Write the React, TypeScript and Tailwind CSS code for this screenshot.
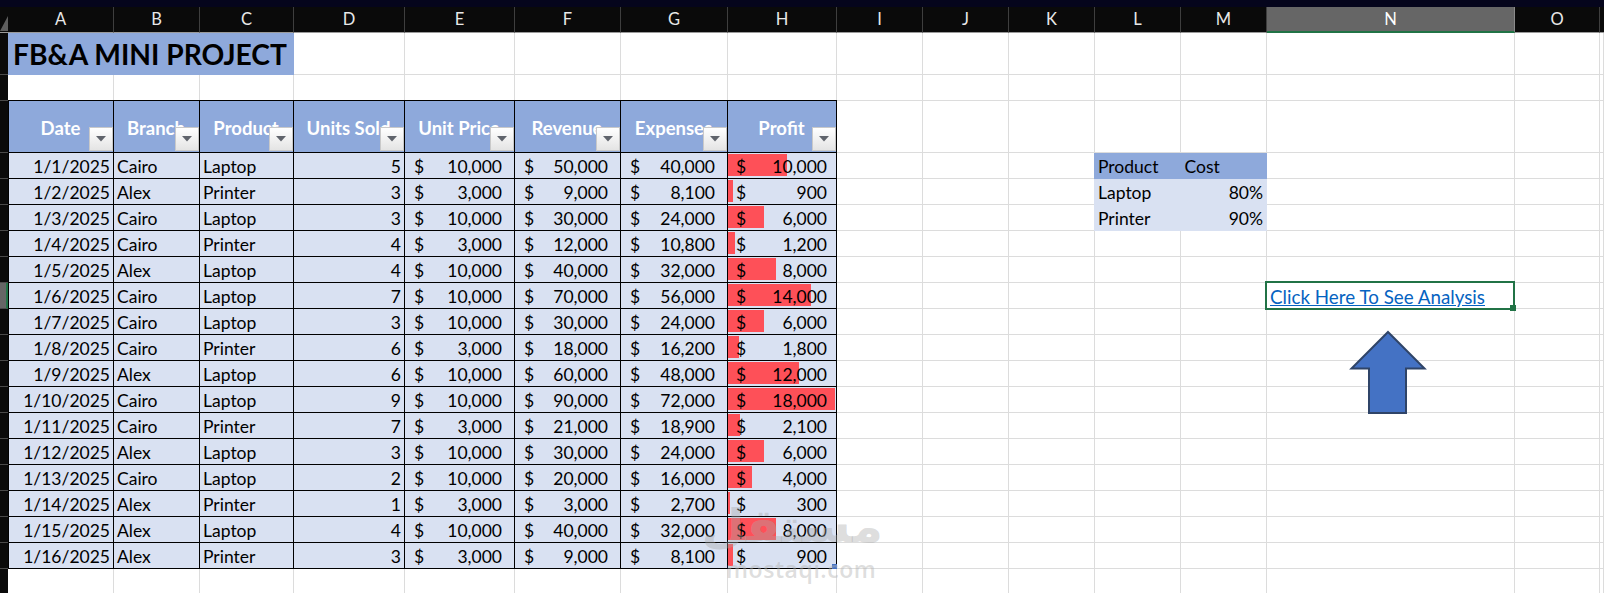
import React from "react";

const font = "font-['Lato','Liberation_Sans',sans-serif]";

const columns = ["A", "B", "C", "D", "E", "F", "G", "H", "I", "J", "K", "L", "M", "N", "O"];

const headers = ["Date", "Branch", "Product", "Units Sold", "Unit Price", "Revenue", "Expenses", "Profit"];

const sales = [
  ["1/1/2025", "Cairo", "Laptop", "5", "10,000", "50,000", "40,000", "10,000", 59],
  ["1/2/2025", "Alex", "Printer", "3", "3,000", "9,000", "8,100", "900", 5],
  ["1/3/2025", "Cairo", "Laptop", "3", "10,000", "30,000", "24,000", "6,000", 36],
  ["1/4/2025", "Cairo", "Printer", "4", "3,000", "12,000", "10,800", "1,200", 7],
  ["1/5/2025", "Alex", "Laptop", "4", "10,000", "40,000", "32,000", "8,000", 48],
  ["1/6/2025", "Cairo", "Laptop", "7", "10,000", "70,000", "56,000", "14,000", 83],
  ["1/7/2025", "Cairo", "Laptop", "3", "10,000", "30,000", "24,000", "6,000", 36],
  ["1/8/2025", "Cairo", "Printer", "6", "3,000", "18,000", "16,200", "1,800", 11],
  ["1/9/2025", "Alex", "Laptop", "6", "10,000", "60,000", "48,000", "12,000", 71],
  ["1/10/2025", "Cairo", "Laptop", "9", "10,000", "90,000", "72,000", "18,000", 107],
  ["1/11/2025", "Cairo", "Printer", "7", "3,000", "21,000", "18,900", "2,100", 12],
  ["1/12/2025", "Alex", "Laptop", "3", "10,000", "30,000", "24,000", "6,000", 36],
  ["1/13/2025", "Cairo", "Laptop", "2", "10,000", "20,000", "16,000", "4,000", 24],
  ["1/14/2025", "Alex", "Printer", "1", "3,000", "3,000", "2,700", "300", 2],
  ["1/15/2025", "Alex", "Laptop", "4", "10,000", "40,000", "32,000", "8,000", 48],
  ["1/16/2025", "Alex", "Printer", "3", "3,000", "9,000", "8,100", "900", 5],
] as const;

const FilterButton = () => (
  <div className="absolute right-0 bottom-[1px] flex h-[24px] w-[24px] items-center justify-center border border-[#c9c9c9] bg-gradient-to-b from-[#ffffff] to-[#e4e4e4]">
    <svg width="10" height="6" viewBox="0 0 10 6">
      <path d="M0 0h10L5 5.5z" fill="#60646c" />
    </svg>
  </div>
);

const Money = ({ value }: { value: string }) => (
  <div className="flex w-full justify-between pr-[12px] pl-[9px]">
    <span>$</span>
    <span>{value}</span>
  </div>
);

const Cell = ({ children, className = "" }: { children: React.ReactNode; className?: string }) => (
  <div className={`relative flex h-[26px] items-center border-r border-b border-black bg-[#d9e1f2] pt-[3px] ${className}`}>
    {children}
  </div>
);

const ProfitCell = ({ value, bar }: { value: string; bar: number }) => (
  <Cell>
    <div className="absolute top-[1px] bottom-[2px] left-0 bg-[#fe5058]" style={{ width: bar }} />
    <div className="relative flex w-full justify-between pr-[9px] pl-[8px]">
      <span>$</span>
      <span>{value}</span>
    </div>
  </Cell>
);

export default function App() {
  return (
    <div className={`relative h-[593px] w-[1604px] overflow-hidden bg-white text-[17.5px] leading-none text-black ${font}`}>
      <div className="h-[7px] bg-[#05051c]" />

      {/* column letters */}
      <div className="flex h-[26px] bg-[#0a0a0a]">
        <div className="flex w-[8px] items-end border-b border-[#9a9a9a]">
          <svg width="8" height="18" viewBox="0 0 8 18">
            <path d="M8 2V17H0z" fill="#5e5e5e" />
          </svg>
        </div>
        <div className="grid flex-1 grid-cols-[106px_86px_94px_111px_110px_106px_107px_109px_86px_86px_86px_86px_86px_248px_85px_1fr]">
          {columns.map((c) => (
            <div
              key={c}
              className={`flex items-center justify-center border-r text-[16.5px] ${
                c === "N"
                  ? "border-r-[#8a8a8a] border-b-2 border-b-[#217346] bg-[#666666] text-white"
                  : "border-r-[#3e3e3e] border-b border-b-[#9a9a9a] text-[#e8e8e8]"
              }`}
            >
              {c}
            </div>
          ))}
          <div className="border-b border-[#9a9a9a]" />
        </div>
      </div>

      <div className="flex">
        {/* row numbers strip */}
        <div className="flex w-[8px] flex-col bg-[#0a0a0a]">
          {[42, 26, 52, ...Array(17).fill(26)].map((h, i) => (
            <div
              key={i}
              className={`border-b border-[#4a4a4a] ${i === 8 ? "border-r-2 border-r-[#217346] bg-[#666666]" : ""}`}
              style={{ height: h }}
            />
          ))}
        </div>

        <div className="relative flex-1">
          {/* empty sheet grid */}
          <div className="absolute inset-0 grid grid-cols-[106px_86px_94px_111px_110px_106px_107px_109px_86px_86px_86px_86px_86px_248px_85px_1fr] grid-rows-[42px_26px_52px_repeat(17,26px)]">
            {Array.from({ length: 16 * 20 }).map((_, i) => (
              <div key={i} className="border-r border-b border-[#dcdcdc]" />
            ))}
          </div>

          {/* title */}
          <div className="relative flex h-[42px] w-[286px] items-center bg-[#8ea9db] pl-[5px] text-[28.2px] font-bold">
            FB&amp;A MINI PROJECT
          </div>
          <div className="h-[25px]" />

          {/* sales table */}
          <div className="relative w-[829px] border-t border-l border-black">
            <div className="grid grid-cols-[105px_86px_94px_111px_110px_106px_107px_109px]">
              {headers.map((h) => (
                <div
                  key={h}
                  className="relative flex h-[52px] items-center justify-center overflow-hidden border-r border-b border-black bg-[#8ea9db] pt-[3px] text-[18.5px] font-bold whitespace-nowrap text-white"
                >
                  <span className="-ml-[1px]">{h}</span>
                  <FilterButton />
                </div>
              ))}
              {sales.map((r) => (
                <React.Fragment key={r[0]}>
                  <Cell className="justify-end pr-[3px]">{r[0]}</Cell>
                  <Cell className="pl-[3px]">{r[1]}</Cell>
                  <Cell className="pl-[3px]">{r[2]}</Cell>
                  <Cell className="justify-end pr-[3px]">{r[3]}</Cell>
                  <Cell><Money value={r[4]} /></Cell>
                  <Cell><Money value={r[5]} /></Cell>
                  <Cell><Money value={r[6]} /></Cell>
                  <ProfitCell value={r[7]} bar={r[8]} />
                </React.Fragment>
              ))}
            </div>
            <div className="absolute right-0 bottom-0 h-[5px] w-[5px] bg-[#4472c4]" />
          </div>
        </div>
      </div>

      {/* cost table */}
      <div className="absolute top-[153px] left-[1094px] w-[173px]">
        <div className="grid h-[26px] grid-cols-2 items-center bg-[#8ea9db] pt-[1px]">
          <span className="pl-[4px]">Product</span>
          <span className="pl-[4px]">Cost</span>
        </div>
        {[["Laptop", "80%"], ["Printer", "90%"]].map(([p, v]) => (
          <div key={p} className="grid h-[26px] grid-cols-2 items-center bg-[#d9e1f2] pt-[1px]">
            <span className="pl-[4px]">{p}</span>
            <span className="pr-[4px] text-right">{v}</span>
          </div>
        ))}
      </div>

      {/* selected link cell */}
      <div className="absolute top-[281px] left-[1265px] flex h-[29px] w-[250px] items-center border-2 border-[#217346] pt-[3px] pl-[3px]">
        <a className="text-[18.8px] text-[#0563c1] underline">Click Here To See Analysis</a>
        <div className="absolute -right-[3px] -bottom-[3px] h-[6px] w-[6px] bg-[#217346]" />
      </div>

      {/* arrow shape */}
      <svg className="absolute top-[329px] left-[1348px]" width="80" height="86" viewBox="0 0 80 86">
        <path d="M40 3 L76.5 39.5 H58 V84 H21 V39.5 H3.5 Z" fill="#4472c4" stroke="#2f4468" strokeWidth="2" />
      </svg>

      {/* watermark */}
      <div className="pointer-events-none absolute top-[558px] left-[726px] font-['Open_Sans',sans-serif] text-[23px] leading-none font-semibold tracking-wide text-[#b4b4b4]/45">
        mostaqi.com
      </div>
      <div
        dir="rtl"
        className="pointer-events-none absolute top-[503px] left-[725px] w-[152px] scale-x-[1.08] text-center font-['DejaVu_Sans',sans-serif] text-[46px] leading-none font-bold text-[#a8a8a8]/40"
      >
        مستقل
      </div>
    </div>
  );
}
